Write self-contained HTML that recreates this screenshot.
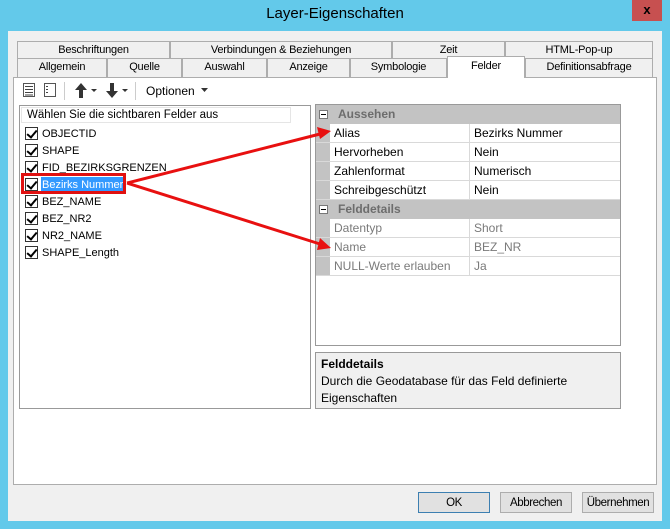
<!DOCTYPE html>
<html><head><meta charset="utf-8"><style>
*{box-sizing:border-box;margin:0;padding:0}
body{width:670px;height:529px;background:#63c9ea;font-family:"Liberation Sans",sans-serif;font-size:12px;color:#000;position:relative;overflow:hidden}
.a{position:absolute}
.tab{position:absolute;background:#f0f0f0;border:1px solid #adadad;border-bottom:none;text-align:center;font-size:11px;line-height:17px;letter-spacing:-0.2px}
.row{position:absolute;left:0;right:0;height:19px;border-bottom:1px solid #d9d9d9;line-height:18px}
.row .k{position:absolute;left:14px;width:140px;padding-left:4px;background:#fff;height:18px;border-right:1px solid #d9d9d9}
.row .v{position:absolute;left:155px;right:0;padding-left:3px;background:#fff;height:18px}
.g{color:#7a7a7a}
.hdr{position:absolute;left:0;right:0;height:19px;background:#c3c3c3;font-weight:bold;color:#6d6d6d;line-height:18px;padding-left:22px}
.minus{position:absolute;left:3px;top:5px;width:9px;height:9px;border:1px solid #777;background:#fff}
.minus:after{content:"";position:absolute;left:1px;top:3px;width:5px;height:1px;background:#000}
.item{position:absolute;left:5px;height:17px;line-height:17px;font-size:11px}
.cb{position:absolute;left:0;top:2px;width:13px;height:13px;border:1px solid #333;background:#fff}
.cb:after{content:"";position:absolute;left:3px;top:0px;width:4px;height:8px;border:solid #000;border-width:0 2px 2px 0;transform:rotate(40deg)}
.item span{position:absolute;left:16px;white-space:nowrap;padding:0 1px;top:1px;height:16px;line-height:16px}
.btn{position:absolute;top:492px;width:72px;height:21px;background:#e1e1e1;border:1px solid #adadad;text-align:center;line-height:20px;font-size:11.5px;letter-spacing:-0.4px}
</style></head><body>
<div class="a" style="left:632px;top:0;width:30px;height:21px;background:#c75050;color:#000;font-weight:bold;text-align:center;line-height:20px;font-size:13px">x</div>
<div class="a" style="left:0;top:5px;width:670px;text-align:center;font-size:15px;color:#000">Layer-Eigenschaften</div>
<div class="a" style="left:8px;top:31px;width:654px;height:490px;background:#f0f0f0"></div>

<div class="tab" style="left:17px;top:41px;width:153px">Beschriftungen</div>
<div class="tab" style="left:170px;top:41px;width:222px">Verbindungen &amp; Beziehungen</div>
<div class="tab" style="left:392px;top:41px;width:113px">Zeit</div>
<div class="tab" style="left:505px;top:41px;width:148px">HTML-Pop-up</div>
<div class="tab" style="left:17px;top:58px;width:90px;height:19px">Allgemein</div>
<div class="tab" style="left:107px;top:58px;width:75px;height:19px">Quelle</div>
<div class="tab" style="left:182px;top:58px;width:85px;height:19px">Auswahl</div>
<div class="tab" style="left:267px;top:58px;width:83px;height:19px">Anzeige</div>
<div class="tab" style="left:350px;top:58px;width:97px;height:19px">Symbologie</div>
<div class="tab" style="left:525px;top:58px;width:128px;height:19px">Definitionsabfrage</div>
<div class="a" style="left:13px;top:77px;width:644px;height:408px;background:#fff;border:1px solid #adadad"></div>
<div class="tab" style="left:447px;top:56px;width:78px;height:22px;background:#fff;line-height:18px;border-color:#adadad">Felder</div>

<svg class="a" style="left:20px;top:80px" width="200" height="22">
<rect x="3.5" y="3.5" width="11" height="13" fill="#fff" stroke="#555"/>
<g stroke="#444"><line x1="5" y1="6.5" x2="13" y2="6.5"/><line x1="5" y1="9.5" x2="13" y2="9.5"/><line x1="5" y1="12.5" x2="13" y2="12.5"/><line x1="5" y1="15" x2="13" y2="15"/></g>
<rect x="24.5" y="3.5" width="11" height="13" fill="#fff" stroke="#555"/>
<g stroke="#444"><line x1="26" y1="6.5" x2="28" y2="6.5"/><line x1="26" y1="9.5" x2="28" y2="9.5"/><line x1="26" y1="12.5" x2="28" y2="12.5"/></g>
<line x1="44.5" y1="2" x2="44.5" y2="20" stroke="#ccc"/>
<path d="M61 3 L55 10 H59 V18 H63 V10 H67 Z" fill="#333"/>
<path d="M71 9 H77 L74 12 Z" fill="#333"/>
<path d="M92 18 L86 11 H90 V3 H94 V11 H98 Z" fill="#333"/>
<path d="M102 9 H108 L105 12 Z" fill="#333"/>
<line x1="115.5" y1="2" x2="115.5" y2="20" stroke="#ccc"/>
<text x="126" y="15" font-size="12" font-family="Liberation Sans">Optionen</text>
<path d="M181 8 H188 L184.5 12 Z" fill="#333"/>
</svg>

<div class="a" style="left:19px;top:105px;width:292px;height:304px;border:1px solid #999;background:#fff">
 <div class="a" style="left:1px;top:1px;width:270px;height:16px;border:1px solid #e5e5e5;line-height:14px;padding-left:5px;font-size:11.5px">Wählen Sie die sichtbaren Felder aus</div>
 <div class="item" style="top:19px"><div class="cb"></div><span>OBJECTID</span></div>
 <div class="item" style="top:36px"><div class="cb"></div><span>SHAPE</span></div>
 <div class="item" style="top:53px"><div class="cb"></div><span>FID_BEZIRKSGRENZEN</span></div>
 <div class="item" style="top:70px"><div class="cb"></div><span style="background:#3399ff;color:#fff">Bezirks Nummer</span></div>
 <div class="item" style="top:87px"><div class="cb"></div><span>BEZ_NAME</span></div>
 <div class="item" style="top:104px"><div class="cb"></div><span>BEZ_NR2</span></div>
 <div class="item" style="top:121px"><div class="cb"></div><span>NR2_NAME</span></div>
 <div class="item" style="top:138px"><div class="cb"></div><span>SHAPE_Length</span></div>
</div>
<div class="a" style="left:21px;top:173px;width:105px;height:21px;border:3px solid #e01010"></div>

<div class="a" style="left:315px;top:104px;width:306px;height:242px;border:1px solid #999;background:#fff">
 <div class="a" style="left:0;top:0;width:14px;height:171px;background:#c3c3c3"></div>
 <div class="hdr" style="top:0"><div class="minus"></div>Aussehen</div>
 <div class="row" style="top:19px"><div class="k">Alias</div><div class="v">Bezirks Nummer</div></div>
 <div class="row" style="top:38px"><div class="k">Hervorheben</div><div class="v">Nein</div></div>
 <div class="row" style="top:57px"><div class="k">Zahlenformat</div><div class="v">Numerisch</div></div>
 <div class="row" style="top:76px"><div class="k">Schreibgeschützt</div><div class="v">Nein</div></div>
 <div class="hdr" style="top:95px"><div class="minus"></div>Felddetails</div>
 <div class="row g" style="top:114px"><div class="k">Datentyp</div><div class="v">Short</div></div>
 <div class="row g" style="top:133px"><div class="k">Name</div><div class="v">BEZ_NR</div></div>
 <div class="row g" style="top:152px"><div class="k">NULL-Werte erlauben</div><div class="v">Ja</div></div>
</div>
<div class="a" style="left:315px;top:352px;width:306px;height:57px;border:1px solid #999;background:#f0f0f0;padding:3px 5px;line-height:17px">
 <b>Felddetails</b><br>Durch die Geodatabase für das Feld definierte<br>Eigenschaften
</div>

<svg class="a" style="left:0;top:0" width="670" height="529">
<g stroke="#e81010" stroke-width="3" fill="#e81010">
<line x1="127" y1="183" x2="320" y2="134"/>
<line x1="127" y1="183" x2="320" y2="244"/>
</g>
<path d="M331 131 L317 127 L320 139 Z" fill="#e81010"/>
<path d="M331 248 L320 238 L317 250 Z" fill="#e81010"/>
</svg>

<div class="btn" style="left:418px;border-color:#3c7fb1">OK</div>
<div class="btn" style="left:500px">Abbrechen</div>
<div class="btn" style="left:582px">Übernehmen</div>
</body></html>
